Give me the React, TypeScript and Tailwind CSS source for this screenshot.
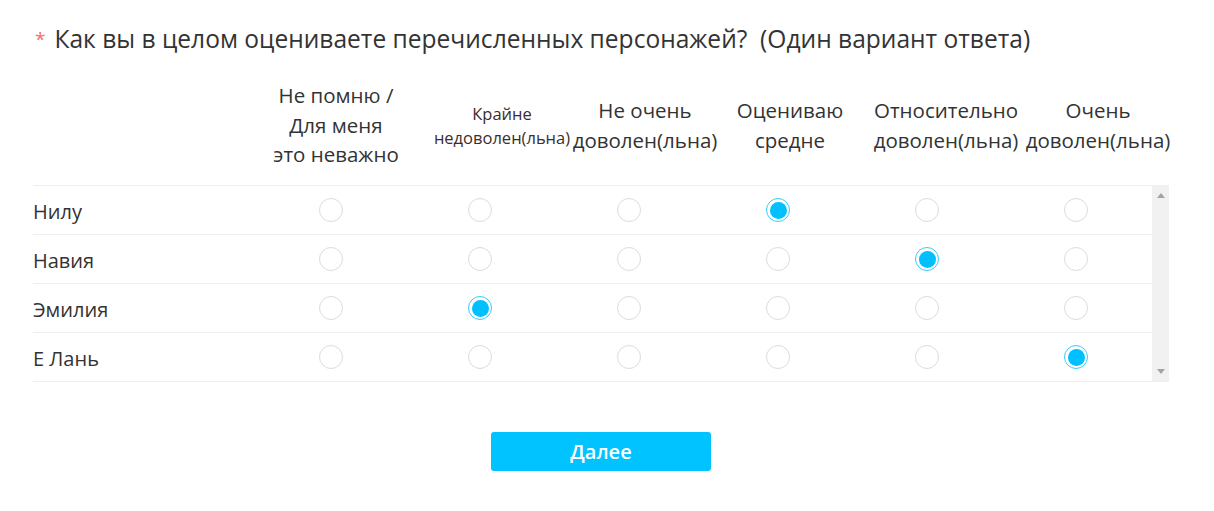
import React from "react";

const cols = [
  { lines: ["Не помню /", "Для меня", "это неважно"], small: false },
  { lines: ["Крайне", "недоволен(льна)"], small: true },
  { lines: ["Не очень", "доволен(льна)"], small: false },
  { lines: ["Оцениваю", "средне"], small: false },
  { lines: ["Относительно", "доволен(льна)"], small: false },
  { lines: ["Очень", "доволен(льна)"], small: false },
];

const rows = [
  { name: "Нилу", sel: 3 },
  { name: "Навия", sel: 4 },
  { name: "Эмилия", sel: 1 },
  { name: "Е Лань", sel: 5 },
];

function Radio({ checked }: { checked: boolean }) {
  if (checked) {
    return (
      <span className="flex h-[24px] w-[24px] items-center justify-center rounded-full border border-[#33ccff] bg-white">
        <span className="h-[17px] w-[17px] rounded-full bg-[#00c0ff]" />
      </span>
    );
  }
  return <span className="block h-[24px] w-[24px] rounded-full border border-[#dcdcdc] bg-white" />;
}

export default function App() {
  return (
    <div
      className="min-h-[511px] w-[1214px] overflow-hidden bg-white text-[#333]"
      style={{ fontFamily: '"Open Sans", "Noto Sans", sans-serif' }}
    >
      <div className="ml-[33px] w-[1136px] pt-[21px]">
        <div className="flex items-center h-[36px] text-[24.55px] leading-[36px]">
          <span className="ml-[2px] mr-[9px] text-[19px] text-[#f56c6c]">*</span>
          <span>Как вы в целом оцениваете перечисленных персонажей?&nbsp;&nbsp;(Один вариант ответа)</span>
        </div>

        <div className="mt-[11px] mb-[2px] grid h-[115px] grid-cols-[223px_160px_172px_114px_176px_136px_168px] items-center">
          <div />
          {cols.map((c, i) => (
            <div
              key={i}
              className={
                c.small
                  ? "flex flex-col items-center text-[16.5px] leading-[24px] whitespace-nowrap text-[#3a2e2c]"
                  : "flex flex-col items-center text-[20.5px] leading-[29.5px] whitespace-nowrap"
              }
            >
              {c.lines.map((l, j) => (
                <div key={j}>{l}</div>
              ))}
            </div>
          ))}
        </div>

        <div className="flex border-y border-[#efefef]">
          <div className="w-[1119px]">
            {rows.map((r, ri) => (
              <div
                key={ri}
                className={
                  ri < rows.length - 1
                    ? "grid h-[49px] grid-cols-[223px_repeat(6,149px)] items-center border-b border-[#efefef]"
                    : "grid h-[48px] grid-cols-[223px_repeat(6,149px)] items-center"
                }
              >
                <div className="text-[20px] leading-none pt-[3px]">{r.name}</div>
                {cols.map((_, ci) => (
                  <div key={ci} className="flex justify-center pl-[1px]">
                    <Radio checked={r.sel === ci} />
                  </div>
                ))}
              </div>
            ))}
          </div>
          <div className="flex w-[17px] flex-col items-center justify-between bg-[#f1f1f1] py-[7px]">
            <svg width="8" height="5" viewBox="0 0 8 5">
              <polygon points="4,0 8,5 0,5" fill="#a3a3a3" />
            </svg>
            <svg width="8" height="5" viewBox="0 0 8 5">
              <polygon points="0,0 8,0 4,5" fill="#a3a3a3" />
            </svg>
          </div>
        </div>

        <div className="mt-[50px] flex justify-center">
          <button className="h-[39px] w-[220px] rounded-[3px] bg-[#00c3ff] text-[20px] font-semibold text-white">
            Далее
          </button>
        </div>
      </div>
    </div>
  );
}
